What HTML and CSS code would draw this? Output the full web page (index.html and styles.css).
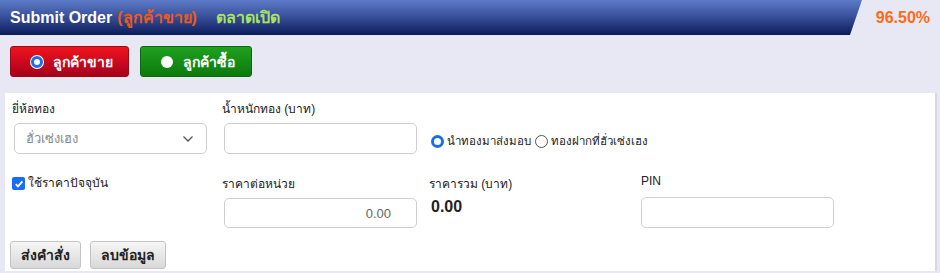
FILE: index.html
```html
<!DOCTYPE html>
<html>
<head>
    <meta charset="utf-8">
    <title>Submit Order</title>
    <link rel="stylesheet" href="styles.css">
</head>
<body>
    <div class="topbar">
        <div class="title-bar">
            <span class="title">Submit Order</span>
            <span class="side">(ลูกค้าขาย)</span>
            <span class="market">ตลาดเปิด</span>
        </div>
        <div class="percent">96.50%</div>
    </div>

    <div class="side-switch">
        <button class="side-btn sell"><span class="dot checked"></span>ลูกค้าขาย</button>
        <button class="side-btn buy"><span class="dot"></span>ลูกค้าซื้อ</button>
    </div>

    <div class="panel">
        <div class="form-grid">
            <div class="field">
                <label>ยี่ห้อทอง</label>
                <div class="select">
                    <span>ฮั่วเซ่งเฮง</span>
                    <svg width="12" height="8" viewBox="0 0 12 8"><path d="M1.5 1.5 L6 6 L10.5 1.5" fill="none" stroke="#555" stroke-width="1.3"/></svg>
                </div>
            </div>
            <div class="field">
                <label>น้ำหนักทอง (บาท)</label>
                <input class="text-input" type="text">
            </div>
            <div class="field wide delivery">
                <label class="radio"><span class="rdo on"></span>นำทองมาส่งมอบ</label>
                <label class="radio"><span class="rdo"></span>ทองฝากที่ฮั่วเซ่งเฮง</label>
            </div>

            <div class="field">
                <label class="check"><span class="box">
                    <svg width="10" height="10" viewBox="0 0 10 10"><path d="M1.8 5.2 L4 7.4 L8.4 2.4" fill="none" stroke="#fff" stroke-width="1.8"/></svg>
                </span>ใช้ราคาปัจจุบัน</label>
            </div>
            <div class="field">
                <label>ราคาต่อหน่วย</label>
                <input class="text-input right" type="text" value="0.00">
            </div>
            <div class="field total-field">
                <label>ราคารวม (บาท)</label>
                <div class="total">0.00</div>
            </div>
            <div class="field pin">
                <label>PIN</label>
                <input class="text-input" type="text">
            </div>
        </div>

        <div class="actions">
            <button class="grey-btn">ส่งคำสั่ง</button>
            <button class="grey-btn">ลบข้อมูล</button>
        </div>
    </div>
</body>
</html>
```

FILE: styles.css
```css
body {
    margin: 0;
    padding: 0;
    font-family: 'Liberation Sans', Tahoma, Arial, sans-serif;
    background: #e8e8f5;
    color: #222;
    overflow: hidden;
}

.topbar {
    display: flex;
    align-items: stretch;
    height: 35px;
}

.title-bar {
    width: 862px;
    display: flex;
    align-items: center;
    padding-left: 10px;
    box-sizing: border-box;
    background: linear-gradient(to bottom, #5d7bc8 0%, #3a529c 45%, #0c1c5a 100%);
    clip-path: polygon(0 0, 862px 0, 850px 100%, 0 100%);
    font-size: 16px;
    font-weight: bold;
}

.title { color: #fff; }
.side { color: #ea5a20; margin-left: 5px; }
.market { color: #a6e264; margin-left: 19px; }

.percent {
    flex: 1;
    text-align: right;
    padding-right: 10px;
    line-height: 35px;
    color: #ff6a14;
    font-weight: bold;
    font-size: 16px;
}

.side-switch {
    display: flex;
    gap: 11px;
    padding: 11px 0 0 10px;
    height: 58px;
    box-sizing: border-box;
}

.side-btn {
    height: 31px;
    display: flex;
    align-items: center;
    border-radius: 3px;
    color: #fff;
    font-family: inherit;
    font-weight: bold;
    font-size: 14px;
    padding: 0 0 0 20px;
    white-space: nowrap;
    cursor: pointer;
}

.side-btn.sell {
    width: 119px;
    background: linear-gradient(to bottom, #f0141e, #a6001c);
    border: 1px solid #9a0a14;
}

.side-btn.buy {
    width: 112px;
    background: linear-gradient(to bottom, #1fa01f, #0c7a0c);
    border: 1px solid #0b6a0b;
}

.dot {
    width: 12px;
    height: 12px;
    border-radius: 50%;
    background: #fff;
    margin-right: 10px;
    box-sizing: border-box;
    flex: none;
}

.dot.checked {
    border: 3px solid #1a6cf0;
    background: #fff;
    box-shadow: 0 0 0 1px #fff;
}

.panel {
    margin: 0 3px 0 5px;
    background: #fff;
    border-right: 2px solid #d6d6ec;
    padding: 8px 0 4px 9px;
    height: 178px;
    box-sizing: border-box;
}

.form-grid {
    display: grid;
    grid-template-columns: 193px 192px 191px 193px;
    column-gap: 17px;
    row-gap: 19px;
}

.form-grid > .wide { grid-column: span 2; }

.field label {
    display: block;
    font-size: 12px;
    height: 17px;
    line-height: 17px;
    margin-bottom: 5px;
    color: #222;
    margin-left: -2px;
}

.select, .text-input {
    width: 193px;
    height: 31px;
    box-sizing: border-box;
    border: 1px solid #cfcfcf;
    border-radius: 5px;
    background: #fff;
}

.select {
    display: flex;
    align-items: center;
    justify-content: space-between;
    padding: 0 12px 0 11px;
    font-size: 13px;
    color: #888;
}

.text-input {
    padding: 0 12px;
    font-family: inherit;
    font-size: 13px;
    color: #666;
    display: block;
}

.text-input.right {
    height: 30px;
    text-align: right;
    padding-right: 25px;
}

.delivery {
    display: flex;
    align-items: center;
    padding-top: 25px;
    margin-left: -2px;
}

.delivery label.radio {
    display: flex;
    align-items: center;
    margin: 0 4px 0 0;
    height: 31px;
    line-height: 31px;
    font-size: 11.5px;
}

.rdo {
    width: 13px;
    height: 13px;
    border-radius: 50%;
    border: 1px solid #555;
    box-sizing: border-box;
    margin-right: 3px;
    background: #fff;
}

.rdo.on {
    border: 3px solid #1a6cf0;
    box-shadow: inset 0 0 0 1px #fff;
}

.check {
    display: flex !important;
    align-items: center;
    margin-top: -1px;
}

.box {
    width: 13px;
    height: 13px;
    border-radius: 2px;
    background: #1a6cf0;
    margin-right: 3px;
    display: flex;
    align-items: center;
    justify-content: center;
}

.total-field { margin-left: -2px; }

.total {
    font-size: 16px;
    font-weight: bold;
    line-height: 22px;
    margin-top: -2px;
}

.pin label { margin-top: -3px; margin-bottom: 7px; margin-left: 0; }

.actions {
    display: flex;
    gap: 9px;
    margin-top: 13px;
    margin-left: -4px;
}

.grey-btn {
    height: 28px;
    padding: 0 10px;
    border: 1px solid #c4c4c4;
    border-radius: 3px;
    background: linear-gradient(to bottom, #f6f6f6, #d8d8d8);
    font-family: inherit;
    font-weight: bold;
    font-size: 14px;
    color: #222;
    cursor: pointer;
}
```
